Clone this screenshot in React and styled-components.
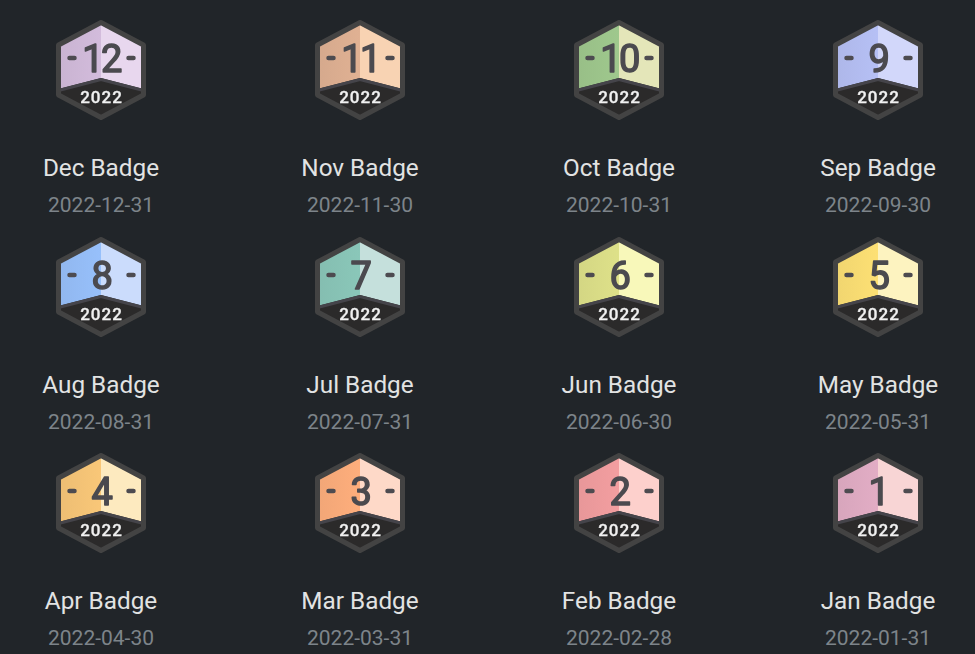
import styled, { createGlobalStyle } from "styled-components";

const GlobalStyle = createGlobalStyle`
  html, body {
    margin: 0;
    height: 100%;
    overflow: hidden;
    background: #212529;
  }
`;

const badges = [
  { n: "12", name: "Dec Badge", date: "2022-12-31", left: "#d3bcdc", right: "#e8d7ee" },
  { n: "11", name: "Nov Badge", date: "2022-11-30", left: "#e0b193", right: "#f8d3b3" },
  { n: "10", name: "Oct Badge", date: "2022-10-31", left: "#9fc88d", right: "#e4e6b9" },
  { n: "9", name: "Sep Badge", date: "2022-09-30", left: "#b6c0f5", right: "#d2d7fa" },
  { n: "8", name: "Aug Badge", date: "2022-08-31", left: "#97c0fb", right: "#cbdcfc" },
  { n: "7", name: "Jul Badge", date: "2022-07-31", left: "#8ac7b9", right: "#c5e0dc" },
  { n: "6", name: "Jun Badge", date: "2022-06-30", left: "#dee189", right: "#f8f8ba" },
  { n: "5", name: "May Badge", date: "2022-05-31", left: "#fde074", right: "#fdf3c0" },
  { n: "4", name: "Apr Badge", date: "2022-04-30", left: "#f9c778", right: "#fdeabf" },
  { n: "3", name: "Mar Badge", date: "2022-03-31", left: "#feae7c", right: "#fed9c8" },
  { n: "2", name: "Feb Badge", date: "2022-02-28", left: "#f39ea0", right: "#fdd0cc" },
  { n: "1", name: "Jan Badge", date: "2022-01-31", left: "#e2adc5", right: "#f8d5d5" },
];

const BadgeIcon = ({ n, left, right }) => (
  <BadgeSvg viewBox="0 0 100 110" width="100" height="110">
    <defs>
      <linearGradient id={`left-${n}`} x1="0" y1="0" x2="1" y2="0">
        <stop offset="0" stopColor={left} stopOpacity="0.94" />
        <stop offset="1" stopColor={left} />
      </linearGradient>
    </defs>
    <path d="M50 7.5 L92.5 30 V80 L50 102.5 L7.5 80 V30 Z" fill="#2b2a2a" />
    <path d="M50 7.5 L7.5 30 V74 L50 63 Z" fill={`url(#left-${n})`} />
    <path d="M50 7.5 L92.5 30 V74 L50 63 Z" fill={right} />
    <path d="M7.5 75.5 L50 64.5 L92.5 75.5" fill="none" stroke="#45444a" strokeWidth="3" />
    <path
      d="M50 7.5 L92.5 30 V80 L50 102.5 L7.5 80 V30 Z"
      fill="none"
      stroke="#434343"
      strokeWidth="5"
      strokeLinejoin="round"
    />
    <path
      d="M18.5 43 H23.5 M77.5 43 H82.5"
      stroke="#4d4b50"
      strokeWidth="4.5"
      strokeLinecap="round"
    />
    <Digit x="0" y="56.5" textAnchor="middle">{n}</Digit>
    <Year x="50.5" y="88" textAnchor="middle">2022</Year>
  </BadgeSvg>
);

export default function App() {
  return (
    <>
      <GlobalStyle />
      <BadgeGrid>
        {badges.map(badge => (
          <BadgeCard key={badge.n}>
            <BadgeIcon n={badge.n} left={badge.left} right={badge.right} />
            <BadgeName>{badge.name}</BadgeName>
            <BadgeDate>{badge.date}</BadgeDate>
          </BadgeCard>
        ))}
      </BadgeGrid>
    </>
  );
}

const BadgeGrid = styled.div`
  display: grid;
  grid-template-columns: repeat(4, 160px);
  grid-auto-rows: 216.5px;
  column-gap: 99px;
  padding: 15px 0 0 21px;
  font-family: Roboto, "Liberation Sans", sans-serif;
`;

const BadgeCard = styled.div`
  display: flex;
  flex-direction: column;
  align-items: center;
`;

const BadgeSvg = styled.svg`
  display: block;
  flex: none;
  filter: blur(0.4px);
`;

const Digit = styled.text`
  font-family: Roboto, sans-serif;
  font-size: 38px;
  font-weight: 400;
  letter-spacing: -2.5px;
  fill: #4b4a4f;
  stroke: #4b4a4f;
  stroke-width: 1.5px;
  stroke-linejoin: round;
  transform: translateX(50px) scaleX(1);
`;

const Year = styled.text`
  font-family: Roboto, sans-serif;
  font-size: 17px;
  font-weight: 500;
  letter-spacing: 1px;
  fill: #f1f1f1;
  stroke: #f1f1f1;
  stroke-width: 0.3px;
`;

const BadgeName = styled.div`
  margin-top: 28px;
  font-size: 24.3px;
  font-weight: 400;
  line-height: 30px;
  color: #e2e3e3;
`;

const BadgeDate = styled.div`
  margin-top: 10px;
  font-size: 21px;
  line-height: 24px;
  color: #7d848a;
`;
